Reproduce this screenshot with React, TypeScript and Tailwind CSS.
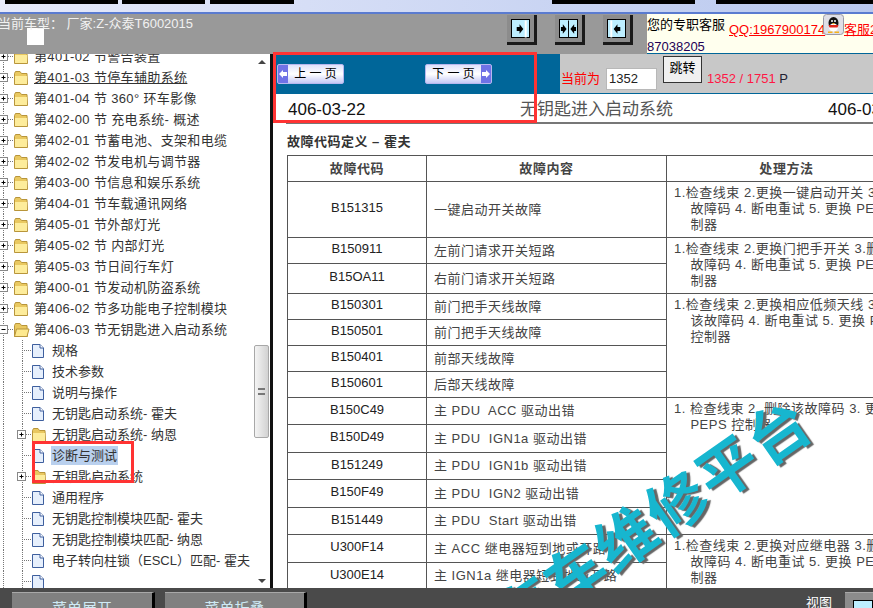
const FONT = "[font-family:'Liberation_Sans','Noto_Sans_CJK_SC',sans-serif]";

const treeTop = [
  "第401-02 节警告装置",
  "第401-03 节停车辅助系统",
  "第401-04 节 360° 环车影像",
  "第402-00 节 充电系统- 概述",
  "第402-01 节蓄电池、支架和电缆",
  "第402-02 节发电机与调节器",
  "第403-00 节信息和娱乐系统",
  "第404-01 节车载通讯网络",
  "第405-01 节外部灯光",
  "第405-02 节 内部灯光",
  "第405-03 节日间行车灯",
  "第400-01 节发动机防盗系统",
  "第406-02 节多功能电子控制模块",
];

const treeChildren: { label: string; folder?: boolean; selected?: boolean }[] = [
  { label: "规格" },
  { label: "技术参数" },
  { label: "说明与操作" },
  { label: "无钥匙启动系统- 霍夫" },
  { label: "无钥匙启动系统- 纳恩", folder: true },
  { label: "诊断与测试", selected: true },
  { label: "无钥匙启动系统", folder: true },
  { label: "通用程序" },
  { label: "无钥匙控制模块匹配- 霍夫" },
  { label: "无钥匙控制模块匹配- 纳恩" },
  { label: "电子转向柱锁（ESCL）匹配- 霍夫" },
  { label: "" },
];

function Folder({ x, open }: { x: number; open?: boolean }) {
  return (
    <g transform={`translate(${x} 3)`}>
      <path d="M0.5 3.5 L1.5 1.5 H6 L7.5 3.5 H13 L13.5 14.5 H0.5 Z" fill="#e9c860" stroke="#b8953a" />
      {open ? (
        <path d="M0.5 14.5 L2.5 7 H15 L13 14.5 Z" fill="#fde98f" stroke="#b8953a" />
      ) : (
        <path d="M1 6 H13 V14 H1 Z" fill="#fdec9b" />
      )}
    </g>
  );
}

function Page({ x }: { x: number }) {
  return (
    <g transform={`translate(${x} 4)`}>
      <path d="M0.5 0.5 H8 L11.5 4 V13.5 H0.5 Z" fill="#e6effc" stroke="#3e5f9e" />
      <path d="M8 0.5 V4 H11.5" fill="#ffffff" stroke="#3e5f9e" />
    </g>
  );
}

function PlusBox({ x, minus }: { x: number; minus?: boolean }) {
  return (
    <g>
      <rect x={x - 4.5} y="6.5" width="8" height="8" fill="#fff" stroke="#888" />
      <path d={`M${x - 2.5} 10.5 H${x + 1.5}`} stroke="#000" />
      {!minus && <path d={`M${x - 0.5} 8.5 V12.5`} stroke="#000" />}
    </g>
  );
}

function TopGutter({ minus }: { minus?: boolean }) {
  return (
    <svg width="34" height="21" className="shrink-0">
      <path d="M3.5 0 V21" stroke="#777" strokeDasharray="1 1" />
      <path d="M4 10.5 H14" stroke="#777" strokeDasharray="1 1" />
      <PlusBox x={4} minus={minus} />
      <Folder x={14} open={minus} />
    </svg>
  );
}

function ChildGutter({ folder }: { folder?: boolean }) {
  return (
    <svg width="52" height="21" className="shrink-0">
      <path d="M3.5 0 V21" stroke="#777" strokeDasharray="1 1" />
      <path d="M22.5 0 V21" stroke="#777" strokeDasharray="1 1" />
      <path d="M22 10.5 H32" stroke="#777" strokeDasharray="1 1" />
      {folder ? (
        <>
          <PlusBox x={22} />
          <Folder x={32} />
        </>
      ) : (
        <Page x={32} />
      )}
    </svg>
  );
}

function ScrollBar() {
  return (
    <div className="w-[17px] shrink-0 flex flex-col items-center bg-white">
      <div className="h-[20px] pt-[6px]">
        <div className="w-0 h-0 border-x-[4px] border-x-transparent border-b-[4px] border-b-[#444]" />
      </div>
      <div className="mt-[271px] h-[93px] w-[15px] rounded-[2px] border border-[#a8a8a8] bg-linear-to-r from-[#f4f4f4] to-[#d2d2d2] flex items-center justify-center">
        <div className="w-[7px] h-[7px] border-y-2 border-[#777]" />
      </div>
      <div className="mt-auto pb-[5px]">
        <div className="w-0 h-0 border-x-[4px] border-x-transparent border-t-[4px] border-t-[#444]" />
      </div>
    </div>
  );
}

function Tree() {
  return (
    <div className="w-[270px] shrink-0 flex bg-white overflow-hidden">
      <div className="flex-1 overflow-hidden text-[13px] leading-[21px] text-[#333] whitespace-nowrap">
        <div className="-mt-[8px]">
          {treeTop.map((t, i) => (
            <div key={t} className="flex h-[21px] items-center tracking-[0.35px]">
              <TopGutter />
              <span className={i === 1 ? "underline" : ""}>{t}</span>
            </div>
          ))}
          <div className="flex h-[21px] items-center tracking-[0.35px]">
            <TopGutter minus />
            <span>第406-03 节无钥匙进入启动系统</span>
          </div>
          {treeChildren.map((c, i) => (
            <div key={i} className="flex h-[21px] items-center">
              <ChildGutter folder={c.folder} />
              <span className={c.selected ? "bg-[#b9d0ee] px-px -ml-px leading-[19px]" : ""}>{c.label}</span>
            </div>
          ))}
        </div>
      </div>
      <ScrollBar />
    </div>
  );
}

function ArrowButton({ dir }: { dir: "right" | "both" | "left" }) {
  return (
    <div className="w-[30px] h-[30px] bg-[#8c8c8c] border-r-[3px] border-b-[3px] border-r-[#1a1a1a] border-b-[#1a1a1a] p-[4px]">
      <div className="w-full h-full bg-[#bdeeff] border border-black flex items-center justify-center">
        <svg width="18" height="18" viewBox="0 0 18 18">
          {dir === "right" && (
            <>
              <path d="M14.5 0 V18" stroke="#fff" strokeWidth="2" />
              <path d="M5 7 H8 V4 L12 9 L8 14 V11 H5 Z" fill="#000" />
            </>
          )}
          {dir === "left" && (
            <>
              <path d="M3.5 0 V18" stroke="#fff" strokeWidth="2" />
              <path d="M13 7 H10 V4 L6 9 L10 14 V11 H13 Z" fill="#000" />
            </>
          )}
          {dir === "both" && (
            <>
              <path d="M9 0 V18" stroke="#000" />
              <path d="M1 7 H3 V4 L7 9 L3 14 V11 H1 Z" fill="#000" />
              <path d="M17 7 H15 V4 L11 9 L15 14 V11 H17 Z" fill="#000" />
            </>
          )}
        </svg>
      </div>
    </div>
  );
}

function Penguin() {
  return (
    <svg width="21" height="21" viewBox="0 0 21 21" className="shrink-0">
      <rect x="0.5" y="0.5" width="20" height="20" rx="3" fill="#dfdfe6" stroke="#9a9aa6" />
      <ellipse cx="10.5" cy="9" rx="5" ry="6" fill="#111" />
      <ellipse cx="10.5" cy="13.5" rx="4.5" ry="4" fill="#fff" />
      <path d="M5.5 11 H15.5 L14.5 13.5 H6.5 Z" fill="#e0241a" />
      <circle cx="9" cy="7" r="1" fill="#fff" />
      <circle cx="12" cy="7" r="1" fill="#fff" />
      <path d="M9 9 H12 L10.5 10.5 Z" fill="#f5b21a" />
      <path d="M5 17.5 H9.5 V19 H5 Z M11.5 17.5 H16 V19 H11.5 Z" fill="#f5b21a" />
    </svg>
  );
}

function NavButton({ label, dir }: { label: string; dir: "prev" | "next" }) {
  const cap = (
    <div className="w-[10px] h-full bg-[#6f72e6] flex items-center justify-center">
      <svg width="8" height="8" viewBox="0 0 8 8">
        <path d={dir === "prev" ? "M0 4 L4 0 V2 H8 V6 H4 V8 Z" : "M8 4 L4 0 V2 H0 V6 H4 V8 Z"} fill="#fff" />
      </svg>
    </div>
  );
  return (
    <div className="w-[67px] h-[20px] flex items-stretch items-center rounded-[2px] border border-[#b7b7ee] bg-linear-to-b from-[#dfe2fb] via-white to-[#c6c9f5] overflow-hidden text-[12px] text-black">
      {dir === "prev" && cap}
      <span className="flex-1 text-center leading-[18px]">{label}</span>
      {dir === "next" && cap}
    </div>
  );
}

type Row = { code: string; content: string; fix?: string[]; span?: number; h: number };

const rows: Row[] = [
  { code: "B151315", content: "一键启动开关故障", fix: ["1.检查线束 2.更换一键启动开关 3.删除该", "    故障码 4. 断电重试 5. 更换 PEPS 控", "    制器"], span: 1, h: 56 },
  { code: "B150911", content: "左前门请求开关短路", fix: ["1.检查线束 2.更换门把手开关 3.删除该", "    故障码 4. 断电重试 5. 更换 PEPS 控", "    制器"], span: 2, h: 26 },
  { code: "B15OA11", content: "右前门请求开关短路", h: 30 },
  { code: "B150301", content: "前门把手天线故障", fix: ["1.检查线束 2.更换相应低频天线 3.删除", "    该故障码 4. 断电重试 5. 更换 PEPS", "    控制器"], span: 4, h: 26 },
  { code: "B150501", content: "前门把手天线故障", h: 26 },
  { code: "B150401", content: "前部天线故障", h: 26 },
  { code: "B150601", content: "后部天线故障", h: 26 },
  { code: "B150C49", content: "主 PDU  ACC 驱动出错", fix: ["1. 检查线束 2. 删除该故障码 3. 更换", "    PEPS 控制器"], span: 5, h: 27 },
  { code: "B150D49", content: "主 PDU  IGN1a 驱动出错", h: 28 },
  { code: "B151249", content: "主 PDU  IGN1b 驱动出错", h: 27 },
  { code: "B150F49", content: "主 PDU  IGN2 驱动出错", h: 28 },
  { code: "B151449", content: "主 PDU  Start 驱动出错", h: 27 },
  { code: "U300F14", content: "主 ACC 继电器短到地或开路", fix: ["1.检查线束 2.更换对应继电器 3.删除该", "    故障码 4. 断电重试 5. 更换 PEPS 控", "    制器"], span: 3, h: 28 },
  { code: "U300E14", content: "主 IGN1a 继电器短到地或开路", h: 27 },
  { code: "U300B14", content: "主 IGN1b 继电器短到地或开路", h: 27 },
];

function FaultTable() {
  return (
    <table className="border-collapse table-fixed w-[520px] text-[13px] text-[#444]">
      <colgroup>
        <col className="w-[139px]" />
        <col className="w-[240px]" />
        <col className="w-[240px]" />
      </colgroup>
      <thead>
        <tr className="h-[26px] font-bold tracking-[0.6px]">
          <th className="border border-[#555]">故障代码</th>
          <th className="border border-[#555]">故障内容</th>
          <th className="border border-[#555]">处理方法</th>
        </tr>
      </thead>
      <tbody>
        {rows.map((r) => (
          <tr key={r.code} style={{ height: r.h }}>
            <td className="border border-[#555] text-center text-[#222] pb-[3px]">{r.code}</td>
            <td className="border border-[#555] px-[7px] tracking-[0.5px] whitespace-pre">{r.content}</td>
            {r.fix && (
              <td rowSpan={r.span} className="border border-[#555] align-top pl-[7px] pt-[3px] leading-[16px] whitespace-pre tracking-[0.5px]">
                {r.fix.join("\n")}
              </td>
            )}
          </tr>
        ))}
      </tbody>
    </table>
  );
}

function Watermark() {
  return (
    <div className="absolute left-[501px] top-[599px] -rotate-[35deg] origin-left whitespace-nowrap text-[60px] leading-none font-bold tracking-[2px] text-[#17b6cf] [text-shadow:2px_3px_1px_#666] pointer-events-none">
      汽车维修平台
    </div>
  );
}

export default function App() {
  return (
    <div className={`${FONT} relative w-[873px] h-[608px] overflow-hidden flex flex-col bg-white`}>
      {/* window strip */}
      <div className="h-[14px] shrink-0 flex items-start bg-linear-to-r from-[#e6eafa] to-[#b9c8ee] border-b-[2px] border-b-[#5a7bd0]">
        <div className="ml-[5px] w-[113px] h-[4px] bg-black" />
        <div className="ml-[4px] w-[83px] h-[4px] bg-black" />
        <div className="ml-[5px] w-[84px] h-[4px] bg-black" />
        <div className="ml-[258px] w-[143px] h-[4px] bg-black" />
        <div className="ml-[21px] w-[157px] h-[4px] bg-black" />
      </div>

      {/* header */}
      <div className="h-[40px] shrink-0 flex bg-[#999999]">
        <div className="w-[507px] shrink-0 text-[13px] leading-[18px] text-[#f1f1f1] -ml-[2px] pt-[1px] whitespace-nowrap">
          当前车型：&nbsp;厂家:Z-众泰T6002015
          <div className="ml-[29px] -mt-[5px] w-[17px] h-[17px] bg-white" />
        </div>
        <div className="flex gap-[18px] pl-[2px] pt-px">
          <ArrowButton dir="right" />
          <ArrowButton dir="both" />
          <ArrowButton dir="left" />
        </div>
        <div className="ml-auto w-[226px] bg-[#ffffee] border-b border-b-[#006699] text-[13px] whitespace-nowrap overflow-hidden">
          <div className="flex items-start h-[22px]">
            <span className="pt-[1px] text-black w-[82px] shrink-0">您的专职客服</span>
            <a className="pt-[9px] text-[13px] leading-[14px] text-[#f00] underline w-[94px] shrink-0">QQ:1967900174</a>
            <Penguin />
            <a className="pt-[9px] text-[13px] leading-[14px] text-[#f00] underline">客服2</a>
          </div>
          <div className="mt-[4px] text-[#220055] text-[13px] leading-[14px]">87038205</div>
        </div>
      </div>

      <div className="flex-1 flex min-h-0">
        <Tree />
        <div className="w-[3px] shrink-0 bg-[#111]" />
        <div className="flex-1 min-w-0 flex flex-col overflow-hidden">
          {/* pager */}
          <div className="h-[40px] shrink-0 flex border-b border-b-[#006699]">
            <div className="w-[287px] shrink-0 bg-[#006699] flex items-start pt-[10px] pl-[4px] gap-[81px]">
              <NavButton label="上 一 页" dir="prev" />
              <NavButton label="下 一 页" dir="next" />
            </div>
            <div className="flex-1 bg-[#c8c8c8] flex items-start text-[14px]">
              <span className="mt-[16px] ml-px w-[45px] text-[13px] leading-[18px] text-[#f00]">当前为</span>
              <div className="mt-[14px] w-[51px] h-[22px] bg-white border border-[#b8b8b8] pl-[2px] text-[13px] leading-[20px] text-[#222]">1352</div>
              <div className="mt-[2px] ml-[6px] w-[39px] h-[27px] bg-[#f0f0f0] border border-[#333] text-center text-[13px] leading-[22px] text-black">跳转</div>
              <span className="mt-[16px] ml-[5px] text-[13px] leading-[18px] text-[#ff1744] whitespace-nowrap">
                1352 / 1751 <span className="text-[#223]">P</span>
              </span>
            </div>
          </div>

          {/* scanned page */}
          <div className="flex-1 min-h-0 overflow-hidden pl-[14px]">
            <div className="h-[30px] pt-[3px] flex items-center border-b-2 border-b-[#777] -ml-[1px] text-[17px] whitespace-nowrap">
              <span className="ml-[2px] w-[232px] shrink-0 text-[#111]">406-03-22</span>
              <span className="w-[308px] shrink-0 text-[#555]">无钥匙进入启动系统</span>
              <span className="shrink-0 text-[#111]">406-03-22</span>
            </div>
            <div className="h-[31px] pt-[9px] text-[13px] leading-[18px] font-bold text-[#333] tracking-[0.5px]">
              故障代码定义 – 霍夫
            </div>
            <FaultTable />
          </div>
        </div>
      </div>

      {/* bottom bar */}
      <div className="h-[20px] shrink-0 z-10 flex bg-[#4a4a4a] overflow-hidden relative">
        <div className="ml-[12px] mt-[4px] w-[143px] h-[24px] bg-[#808080] border-t border-t-[#a8a8a8] border-r-[3px] border-r-black text-center pt-[8px] text-[15px] leading-[15px] text-[#cfeaf5]">菜单展开</div>
        <div className="ml-[10px] mt-[4px] w-[142px] h-[24px] bg-[#808080] border-t border-t-[#a8a8a8] border-r-[3px] border-r-black text-center pt-[8px] text-[15px] leading-[15px] text-[#cfeaf5]">菜单折叠</div>
        <span className="ml-auto mt-[8px] mr-[13px] text-[13px] leading-[14px] text-white">视图</span>
        <div className="mt-[4px] w-[28px] h-[24px] bg-[#8c8c8c] border-t border-t-[#a8a8a8] pt-[7px] pl-[8px]">
          <div className="w-full h-full bg-[#bdeeff] border border-black" />
        </div>
      </div>

      <Watermark />

      {/* red annotation boxes */}
      <div className="absolute left-[273px] top-[52px] w-[264px] h-[71px] border-[3px] border-[#ff3333] pointer-events-none" />
      <div className="absolute left-[32px] top-[441px] w-[102px] h-[42px] border-[3px] border-[#ff3333] pointer-events-none" />
    </div>
  );
}
